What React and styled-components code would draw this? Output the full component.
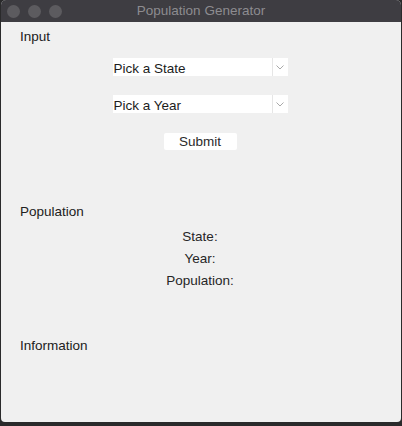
import React from "react";
import styled, { createGlobalStyle } from "styled-components";

const Global = createGlobalStyle`
  html, body { margin: 0; padding: 0; }
  body {
    background: #2a2a2b;
    width: 402px;
    height: 426px;
    overflow: hidden;
    font-family: "Liberation Sans", Arial, sans-serif;
  }
`;

const Window = styled.div`
  width: 400px;
  height: 422px;
  margin: 0 1px;
  display: flex;
  flex-direction: column;
  border-radius: 5px 5px 4px 4px;
  overflow: hidden;
  background: #f0f0f0;
`;

const TitleBar = styled.div`
  height: 22px;
  flex: none;
  background: #3e3d42;
  display: flex;
  align-items: center;
  position: relative;
  padding-left: 6px;
  gap: 8px;
`;

const Light = styled.span`
  width: 13px;
  height: 13px;
  border-radius: 50%;
  background: #5c5b5f;
`;

const Title = styled.div`
  position: absolute;
  left: 0;
  right: 0;
  top: 0;
  line-height: 22px;
  text-align: center;
  font-size: 13.5px;
  color: #8d8c90;
  pointer-events: none;
`;

const Content = styled.div`
  display: flex;
  flex-direction: column;
  padding: 0 21px 0 19px;
  color: #202020;
  font-size: 13.5px;
`;

const SectionLabel = styled.div`
  line-height: 16px;
  margin-top: ${(p) => p.$top}px;
`;

const Combo = styled.div`
  align-self: center;
  width: 175px;
  height: 18px;
  margin-top: ${(p) => p.$top}px;
  background: #ffffff;
  display: flex;
  align-items: stretch;
`;

const ComboText = styled.div`
  flex: 1;
  line-height: 18px;
  padding: 2px 0 0 1px;
  box-sizing: border-box;
  color: #1c1c1c;
`;

const ComboDivider = styled.div`
  width: 1px;
  background: #e6e6e6;
`;

const ComboArrow = styled.div`
  width: 15px;
  display: flex;
  align-items: center;
  justify-content: center;
`;

const Button = styled.div`
  align-self: center;
  width: 73px;
  height: 17px;
  margin-top: 20px;
  background: #ffffff;
  border-radius: 2px;
  line-height: 17px;
  text-align: center;
  color: #2a2a2a;
`;

const InfoList = styled.div`
  display: flex;
  flex-direction: column;
  align-items: center;
  margin-top: 6px;
`;

const InfoRow = styled.div`
  line-height: 22px;
  color: #262626;
`;

const Chevron = () => (
  <svg width="8" height="5" viewBox="0 0 8 5">
    <path d="M0.5 0.5 L4 4 L7.5 0.5" fill="none" stroke="#a9a9a9" strokeWidth="1" />
  </svg>
);

const Select = ({ label, top }) => (
  <Combo $top={top}>
    <ComboText>{label}</ComboText>
    <ComboDivider />
    <ComboArrow>
      <Chevron />
    </ComboArrow>
  </Combo>
);

export default function App() {
  return (
    <>
      <Global />
      <Window>
        <TitleBar>
          <Light />
          <Light />
          <Light />
          <Title>Population Generator</Title>
        </TitleBar>
        <Content>
          <SectionLabel $top={7}>Input</SectionLabel>
          <Select label="Pick a State" top={13} />
          <Select label="Pick a Year" top={19} />
          <Button>Submit</Button>
          <SectionLabel $top={54}>Population</SectionLabel>
          <InfoList>
            <InfoRow>State:</InfoRow>
            <InfoRow>Year:</InfoRow>
            <InfoRow>Population:</InfoRow>
          </InfoList>
          <SectionLabel $top={46}>Information</SectionLabel>
        </Content>
      </Window>
    </>
  );
}
